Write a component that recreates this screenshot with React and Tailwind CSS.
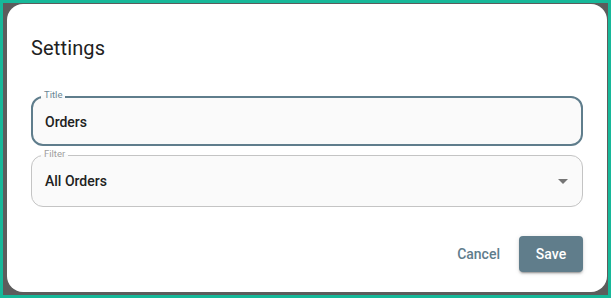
export default function App() {
  return (
    <div
      className="w-[611px] h-[298px] bg-[#17b899] p-[3px] overflow-hidden"
      style={{ fontFamily: "Roboto, 'Liberation Sans', sans-serif" }}
    >
      <div className="w-full h-full bg-[#5c5c5c] pl-[4px] pr-[1px] pt-[1px] pb-[3px]">
        <div className="w-full h-full bg-white rounded-2xl px-[24px] pt-[28px] pb-[20px] flex flex-col">
          <h2 className="text-[20px] leading-[32px] font-normal text-[#212121] tracking-[0.15px]">Settings</h2>

          <div className="mt-[32px] relative h-[50px] rounded-xl border-2 border-[#5f7d8c] bg-[#fafafa] flex items-center px-[12px] pt-[2px]">
            <span className="absolute left-[8px] top-[-9px] px-[3px] text-[9.5px] leading-[12px] text-[#6b8795] bg-linear-to-b from-white from-50% to-[#fafafa] to-50%">
              Title
            </span>
            <span className="text-[14px] text-[#212121] font-medium">Orders</span>
          </div>

          <div className="mt-[9px] relative h-[52px] rounded-xl border border-[#c4c4c4] bg-[#fafafa] flex items-center pl-[13px] pr-[14px] pt-[1px]">
            <span className="absolute left-[9px] top-[-8px] px-[3px] text-[9.5px] leading-[12px] text-[#9e9e9e] bg-linear-to-b from-white from-50% to-[#fafafa] to-50%">
              Filter
            </span>
            <span className="flex-1 text-[14px] text-[#212121] font-medium">All Orders</span>
            <svg width="10" height="5" viewBox="0 0 10 5">
              <path d="M0 0 L10 0 L5 5 Z" fill="#757575" />
            </svg>
          </div>

          <div className="mt-auto flex justify-end items-center gap-[10px]">
            <button className="h-[36px] px-[9px] text-[14px] font-medium text-[#5f7d8c] rounded">Cancel</button>
            <button className="h-[36px] w-[64px] text-[14px] font-medium text-white bg-[#607d8b] rounded shadow-[0_3px_1px_-2px_rgba(0,0,0,0.2),0_2px_2px_0_rgba(0,0,0,0.14),0_1px_5px_0_rgba(0,0,0,0.12)]">
              Save
            </button>
          </div>
        </div>
      </div>
    </div>
  );
}
